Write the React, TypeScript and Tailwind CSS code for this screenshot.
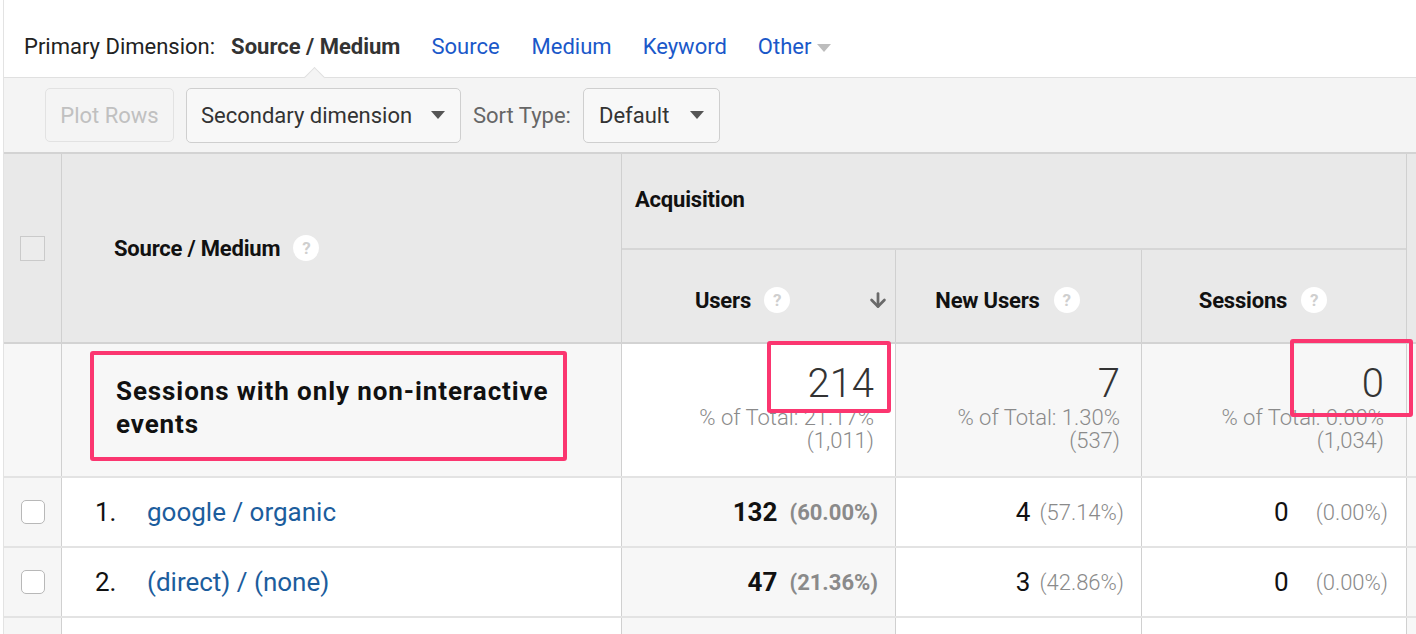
import { ArrowDown } from "lucide-react";

const FONT = { fontFamily: "Roboto, 'Liberation Sans', sans-serif" };

function Help() {
  return (
    <span className="inline-flex w-[26px] h-[26px] rounded-full bg-white items-center justify-center text-[17px] font-bold text-[#cfcfcf] leading-none">
      ?
    </span>
  );
}

function Caret({ className = "" }: { className?: string }) {
  return (
    <span
      className={`inline-block w-0 h-0 border-l-[7px] border-r-[7px] border-t-[8px] border-l-transparent border-r-transparent ${className}`}
    />
  );
}

const ROWS = [
  { n: "1.", label: "google / organic", users: "132", usersPct: "(60.00%)", nu: "4", nuPct: "(57.14%)", s: "0", sPct: "(0.00%)" },
  { n: "2.", label: "(direct) / (none)", users: "47", usersPct: "(21.36%)", nu: "3", nuPct: "(42.86%)", s: "0", sPct: "(0.00%)" },
];

export default function App() {
  return (
    <div className="w-[1416px] h-[634px] overflow-hidden bg-white" style={FONT}>
      <div className="ml-[3px] border-l border-[#e3e3e3] h-full flex flex-col">
        {/* primary dimension bar */}
        <div className="h-[77px] flex items-center pl-[20px] pt-[16px] text-[22px] text-[#222] shrink-0">
          <span>Primary Dimension:</span>
          <span className="ml-[16px] font-bold text-[#333]">Source / Medium</span>
          <span className="ml-[31px] text-[#1a58c9]">Source</span>
          <span className="ml-[32px] text-[#1a58c9]">Medium</span>
          <span className="ml-[31px] text-[#1a58c9]">Keyword</span>
          <span className="ml-[31px] text-[#1a58c9]">Other</span>
          <Caret className="ml-[6px] mt-[2px] border-t-[#bdbdbd]" />
        </div>

        {/* toolbar */}
        <div className="relative h-[75px] shrink-0 bg-[#f4f4f4] border-t border-[#e0e0e0] flex items-center pl-[41px] gap-[12px] text-[22px]">
          <span className="absolute left-[303px] -top-[8px] w-[15px] h-[15px] rotate-45 bg-[#f4f4f4] border-t border-l border-[#e0e0e0]" />
          <div className="h-[54px] w-[129px] rounded-[5px] border border-[#e2e2e2] bg-[#f4f4f4] flex items-center justify-center text-[#c0c0c0]">
            Plot Rows
          </div>
          <div className="h-[55px] w-[275px] rounded-[5px] border border-[#cfcfcf] bg-[#f8f8f8] flex items-center pl-[14px] pr-[15px] text-[#333]">
            <span className="flex-1">Secondary dimension</span>
            <Caret className="border-t-[#555]" />
          </div>
          <span className="text-[#666]">Sort Type:</span>
          <div className="h-[55px] w-[137px] rounded-[5px] border border-[#cfcfcf] bg-[#f8f8f8] flex items-center pl-[15px] pr-[15px] text-[#333]">
            <span className="flex-1">Default</span>
            <Caret className="border-t-[#555]" />
          </div>
        </div>

        {/* table header */}
        <div className="h-[192px] shrink-0 flex bg-[#e9e9e9] border-t-2 border-[#d3d3d3] border-b-2">
          <div className="w-[58px] shrink-0 border-r border-[#d0d0d0] flex items-center justify-center">
            <span className="w-[25px] h-[25px] border border-[#cacaca] bg-[#ececec]" />
          </div>
          <div className="w-[560px] shrink-0 border-r border-[#d0d0d0] flex items-center pl-[52px] gap-[13px] text-[22px] font-bold text-[#111] tracking-[-0.2px]">
            <span>Source / Medium</span>
            <Help />
          </div>
          <div className="w-[785px] shrink-0 border-r border-[#d0d0d0] flex flex-col">
            <div className="h-[96px] border-b-2 border-[#d6d6d6] flex items-center pl-[13px] pb-[4px] text-[22px] font-bold text-[#111] tracking-[-0.2px]">
              Acquisition
            </div>
            <div className="flex-1 flex text-[22px] font-bold text-[#111] tracking-[-0.2px]">
              <div className="relative w-[274px] border-r border-[#d0d0d0] flex items-center justify-center gap-[13px] pr-[32px] pt-[8px]">
                <span>Users</span>
                <Help />
                <ArrowDown className="absolute right-[6px] top-[39px] text-[#6a6a6a]" size={22} strokeWidth={3} />
              </div>
              <div className="w-[246px] border-r border-[#d0d0d0] flex items-center justify-center gap-[14px] pr-[22px] pt-[8px]">
                <span>New Users</span>
                <Help />
              </div>
              <div className="flex-1 flex items-center justify-center gap-[14px] pr-[22px] pt-[8px]">
                <span>Sessions</span>
                <Help />
              </div>
            </div>
          </div>
          <div className="flex-1" />
        </div>

        {/* totals row */}
        <div className="h-[134px] shrink-0 flex bg-[#f7f7f7] border-b-2 border-[#e3e3e3]">
          <div className="w-[58px] shrink-0 border-r border-[#d0d0d0]" />
          <div className="w-[560px] shrink-0 border-r border-[#d0d0d0] pl-[28px] pt-[7px]">
            <div className="w-[477px] h-[110px] border-4 border-[#fb3670] rounded-[3px] flex items-center pl-[22px] pr-[4px] pt-[3px] text-[26px] font-bold leading-[33px] text-[#111] tracking-[0.9px]">
              Sessions with only non-interactive events
            </div>
          </div>
          <div className="relative w-[274px] shrink-0 border-r border-[#d0d0d0] bg-white pr-[21px] pt-[18px] text-right">
            <div className="text-[40px] leading-[44px] text-[#333] font-light">214</div>
            <div className="text-[22px] leading-[23px] text-[#8a8a8a] font-light">% of Total: 21.17%</div>
            <div className="text-[22px] leading-[23px] text-[#8a8a8a] font-light">(1,011)</div>
            <span className="absolute left-[145px] -top-[3px] w-[124px] h-[72px] border-4 border-[#fb3670] rounded-[3px]" />
          </div>
          <div className="w-[246px] shrink-0 border-r border-[#d0d0d0] pr-[21px] pt-[18px] text-right">
            <div className="text-[40px] leading-[44px] text-[#333] font-light">7</div>
            <div className="text-[22px] leading-[23px] text-[#8a8a8a] font-light">% of Total: 1.30%</div>
            <div className="text-[22px] leading-[23px] text-[#8a8a8a] font-light">(537)</div>
          </div>
          <div className="relative w-[265px] shrink-0 border-r border-[#d0d0d0] pr-[22px] pt-[18px] text-right">
            <div className="text-[40px] leading-[44px] text-[#333] font-light">0</div>
            <div className="text-[22px] leading-[23px] text-[#8a8a8a] font-light">% of Total: 0.00%</div>
            <div className="text-[22px] leading-[23px] text-[#8a8a8a] font-light">(1,034)</div>
            <span className="absolute left-[148px] -top-[5px] w-[123px] h-[78px] border-4 border-[#fb3670] rounded-[3px] z-10" />
          </div>
          <div className="flex-1" />
        </div>

        {/* data rows */}
        {ROWS.map((r) => (
          <div key={r.n} className="h-[70px] shrink-0 flex border-b-2 border-[#e3e3e3] text-[26px]">
            <div className="w-[58px] shrink-0 border-r border-[#d0d0d0] bg-[#f6f6f6] flex items-center justify-center">
              <span className="w-[24px] h-[24px] rounded-[5px] border border-[#b8b8b8] bg-white" />
            </div>
            <div className="w-[560px] shrink-0 border-r border-[#d0d0d0] bg-white flex items-center pl-[33px]">
              <span className="w-[52px] text-[#111]">{r.n}</span>
              <span className="text-[#1c5d9d]">{r.label}</span>
            </div>
            <div className="w-[274px] shrink-0 border-r border-[#d0d0d0] bg-[#f7f7f7] flex items-center justify-end pr-[17px]">
              <span className="font-bold text-[#111]">{r.users}</span>
              <span className="ml-[12px] text-[22px] font-bold text-[#8a8a8a]">{r.usersPct}</span>
            </div>
            <div className="w-[246px] shrink-0 border-r border-[#d0d0d0] bg-white flex items-center justify-end pr-[17px]">
              <span className="text-[#111]">{r.nu}</span>
              <span className="ml-[9px] text-[22px] text-[#8a8a8a] font-light">{r.nuPct}</span>
            </div>
            <div className="w-[265px] shrink-0 border-r border-[#d0d0d0] bg-white flex items-center justify-end pr-[18px]">
              <span className="text-[#111]">{r.s}</span>
              <span className="ml-[27px] text-[22px] text-[#8a8a8a] font-light">{r.sPct}</span>
            </div>
            <div className="flex-1 bg-[#f7f7f7]" />
          </div>
        ))}
        <div className="h-[70px] shrink-0 flex">
          <div className="w-[58px] shrink-0 border-r border-[#d0d0d0] bg-[#f6f6f6]" />
          <div className="w-[560px] shrink-0 border-r border-[#d0d0d0] bg-white" />
          <div className="w-[274px] shrink-0 border-r border-[#d0d0d0] bg-[#f7f7f7]" />
          <div className="w-[246px] shrink-0 border-r border-[#d0d0d0] bg-white" />
          <div className="w-[265px] shrink-0 border-r border-[#d0d0d0] bg-white" />
          <div className="flex-1 bg-[#f7f7f7]" />
        </div>
      </div>
    </div>
  );
}
